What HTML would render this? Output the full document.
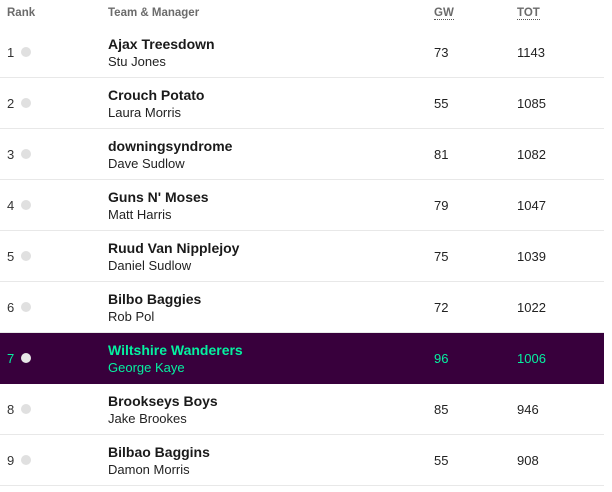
<!DOCTYPE html><html><head><style>
body{margin:0;background:#fff;font-family:"Liberation Sans",sans-serif;width:612px;height:492px;overflow:hidden}
.h{position:absolute;top:7px;font-size:11.5px;font-weight:bold;color:#6b6b6b}
.r{position:absolute;left:0;width:604px;height:50px;border-bottom:1px solid #e8e8e8;color:#222}
.r .n{position:absolute;left:7px;top:18px;font-size:13px;color:#333}
.r .d{position:absolute;left:21px;top:20px;width:10px;height:10px;border-radius:50%;background:#e0e0e0}
.r .t{position:absolute;left:108px;top:9px;font-size:14px;font-weight:bold;color:#1a1a1a}
.r .m{position:absolute;left:108px;top:27px;font-size:13px;color:#222}
.r .g{position:absolute;left:434px;top:18px;font-size:13px}
.r .o{position:absolute;left:517px;top:18px;font-size:13px}
.p{background:#38003c;color:#05f0a0;border-bottom:1px solid #38003c}
.p .t,.p .m,.p .g,.p .o{color:#05f0a0}.p .n{color:#05f0a0}.p .d{background:#e8e8e8}
</style></head><body>
<div class="h" style="left:7px">Rank</div>
<div class="h" style="left:108px">Team &amp; Manager</div>
<div class="h" style="left:434px;border-bottom:1px dotted #555">GW</div>
<div class="h" style="left:517px;border-bottom:1px dotted #555">TOT</div>
<div class="r" style="top:27px"><span class="n">1</span><span class="d"></span><span class="t">Ajax Treesdown</span><span class="m">Stu Jones</span><span class="g">73</span><span class="o">1143</span></div>
<div class="r" style="top:78px"><span class="n">2</span><span class="d"></span><span class="t">Crouch Potato</span><span class="m">Laura Morris</span><span class="g">55</span><span class="o">1085</span></div>
<div class="r" style="top:129px"><span class="n">3</span><span class="d"></span><span class="t">downingsyndrome</span><span class="m">Dave Sudlow</span><span class="g">81</span><span class="o">1082</span></div>
<div class="r" style="top:180px"><span class="n">4</span><span class="d"></span><span class="t">Guns N' Moses</span><span class="m">Matt Harris</span><span class="g">79</span><span class="o">1047</span></div>
<div class="r" style="top:231px"><span class="n">5</span><span class="d"></span><span class="t">Ruud Van Nipplejoy</span><span class="m">Daniel Sudlow</span><span class="g">75</span><span class="o">1039</span></div>
<div class="r" style="top:282px"><span class="n">6</span><span class="d"></span><span class="t">Bilbo Baggies</span><span class="m">Rob Pol</span><span class="g">72</span><span class="o">1022</span></div>
<div class="r p" style="top:333px"><span class="n">7</span><span class="d"></span><span class="t">Wiltshire Wanderers</span><span class="m">George Kaye</span><span class="g">96</span><span class="o">1006</span></div>
<div class="r" style="top:384px"><span class="n">8</span><span class="d"></span><span class="t">Brookseys Boys</span><span class="m">Jake Brookes</span><span class="g">85</span><span class="o">946</span></div>
<div class="r" style="top:435px"><span class="n">9</span><span class="d"></span><span class="t">Bilbao Baggins</span><span class="m">Damon Morris</span><span class="g">55</span><span class="o">908</span></div>
</body></html>
